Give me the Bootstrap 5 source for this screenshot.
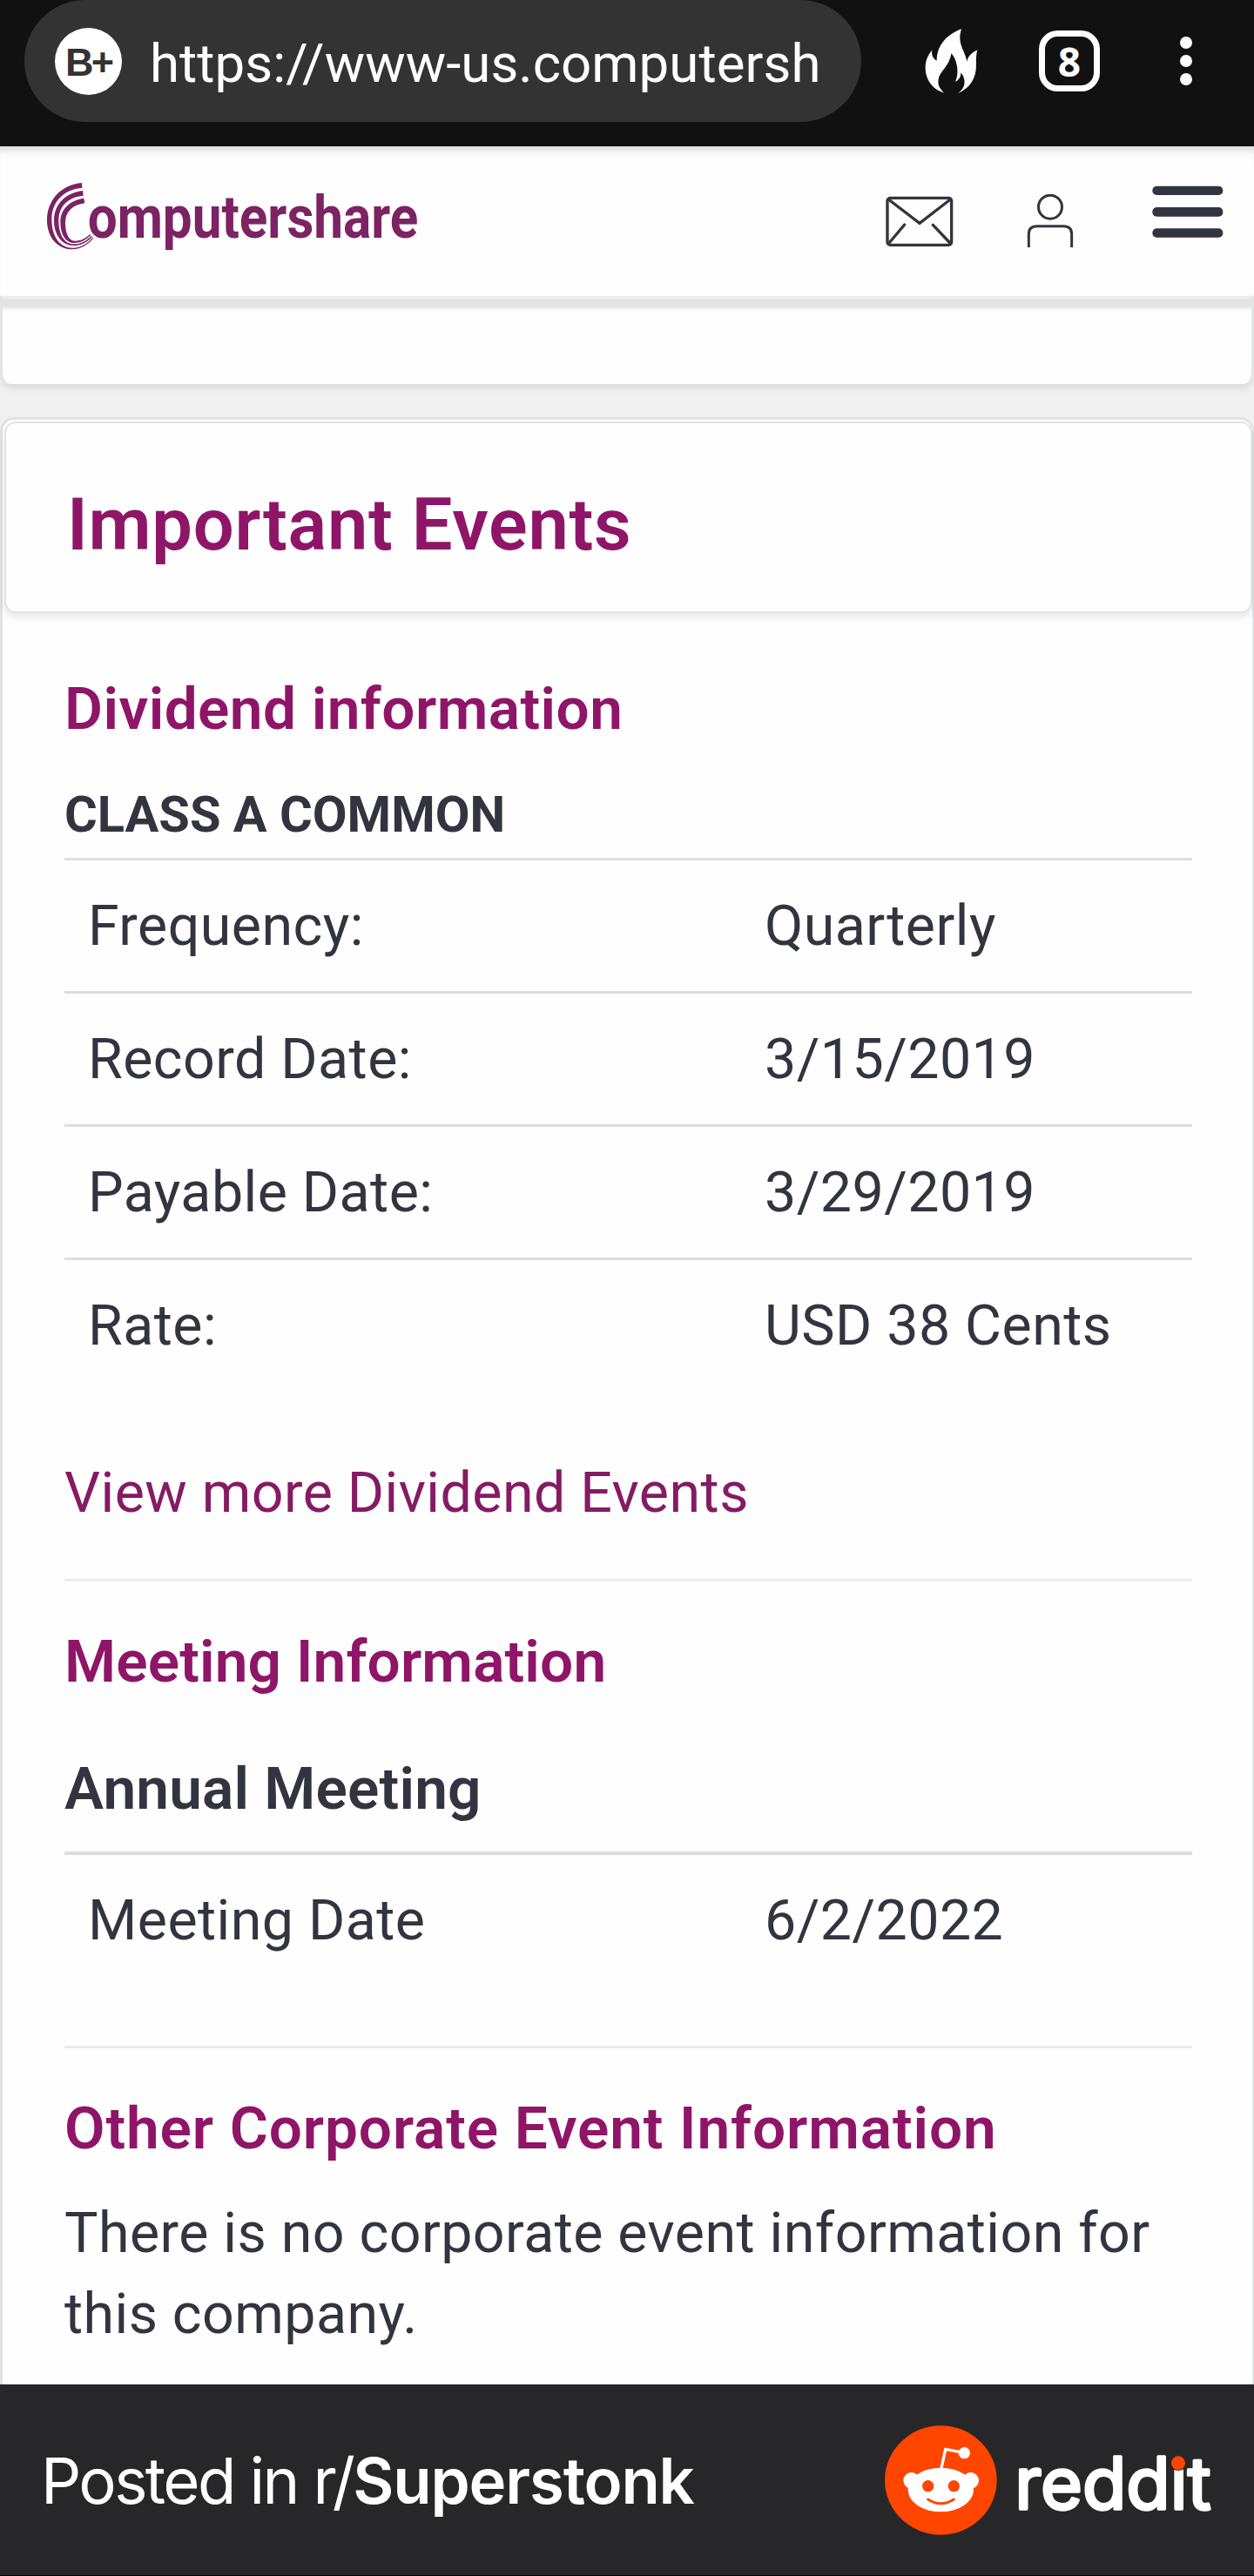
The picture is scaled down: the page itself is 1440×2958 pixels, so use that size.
<!DOCTYPE html>
<html lang="en">
<head>
<meta charset="utf-8">
<meta name="viewport" content="width=device-width, initial-scale=1">
<title>Computershare – Important Events</title>
<link href="https://cdn.jsdelivr.net/npm/bootstrap@5.3.0/dist/css/bootstrap.min.css" rel="stylesheet">
<style>
  body { font-family: Roboto, "Liberation Sans", sans-serif; font-size: 64.5px; line-height: 92.5px; letter-spacing: .45px; color: #32353f; background: #f0f0f0; }
  svg { display: block; flex: none; overflow: visible; }
  .browser-bar { height: 168px; background: #111; }
  .browser-row { height: 140px; }
  .url-pill { width: 961px; height: 140px; margin-left: 28px; padding-left: 35px; border-radius: 70px; background: #333; color: #fff; font-size: 61.8px; letter-spacing: .05px; line-height: 80px; }
  .url-pill .url-text { margin-left: 32px; padding-top: 6px; }
  .flame { margin-left: 73px; }
  .tabs-icon { margin-left: 70px; }
  .dots-icon { margin-left: 92px; }
  .site-nav { height: 172px; background: #fefefe; box-shadow: inset 0 12px 14px -10px rgba(0,0,0,.2); }
  .site-logo { margin: 41px 0 0 54px; }
  .mail-icon { margin: 57px 0 0 537px; }
  .user-icon { margin: 53px 0 0 83px; }
  .menu-icon { margin: 45px 0 0 90px; }
  .prev-panel { height: 101px; border: 3px solid #e3e4e5; border-top: 0; border-bottom: 0; border-radius: 0 0 13px 13px; background: linear-gradient(#ececec 0, #ececec 3px, #e3e3e3 4px, #e4e4e4 12px, #fefefe 17px); box-shadow: 0 4px 8px rgba(0,0,0,.1); }
  .events-panel { margin-top: 38px; height: 2259px; border: 3px solid #e0e1e2; border-right-width: 2px; border-bottom: 0; border-radius: 16px 16px 0 0; background: #fefefe; }
  .events-head { margin: 2px 0 0 2px; height: 220px; padding: 17px 0 0 70px; border: 2px solid #e2e3e3; border-radius: 13px; background: #fefefe; box-shadow: 0 5px 9px rgba(0,0,0,.09); }
  .events-title { font-size: 83px; line-height: 200px; font-weight: 600; letter-spacing: .7px; color: #8f1568; }
  .events-body { padding: 70px 69px 0 71px; }
  .sec-title { font-size: 67.5px; line-height: 80px; font-weight: 600; letter-spacing: .45px; color: #8f1568; }
  .stock-class { margin: 46px 0 15px; font-size: 57.75px; line-height: 70px; font-weight: 700; letter-spacing: 0; }
  .info-row { height: 153px; border-top: 3px solid #dedede; }
  .info-row .info-key { width: 804px; padding-left: 27px; }
  .thick-row { height: 154px; border-top: 4px solid #dcdcdd; }
  .more-link { margin: 71px 0 53px; line-height: 92px; color: #851b64; text-decoration: none; }
  .rule { height: 3px; background: #ebebeb; }
  .meeting-title { margin: 52px 0 0; letter-spacing: .15px; }
  .meeting-kind { margin: 66px 0 32px; letter-spacing: .2px; color: #32353f; }
  .meeting-end { margin-top: 69px; }
  .other-title { margin: 52px 0 34px; letter-spacing: .9px; }
  .post-bar { height: 220px; padding: 0 50px 0 47px; background: #272729; border-bottom: 1px solid #000; color: #fff; font-family: Inter, "Liberation Sans", sans-serif; font-size: 72.5px; letter-spacing: -2.6px; }
  .post-bar b { font-weight: 600; letter-spacing: -1.15px; }
</style>
</head>
<body>
<header class="browser-bar">
  <div class="browser-row d-flex align-items-center">
    <div class="url-pill d-flex align-items-center">
      <svg width="77" height="77" viewBox="0 0 77 77"><circle cx="38.5" cy="38.5" r="38.5" fill="#fff"/><text x="12" y="55" font-family="Liberation Sans" font-weight="700" font-size="45" fill="#333" textLength="56">B+</text></svg>
      <span class="url-text">https://www-us.computersh</span>
    </div>
    <svg class="flame" width="61" height="75" viewBox="306 98 183 224"><path fill="#fff" d="M432 98C400 110 347 140 347 208C335 200 328 190 331 171C315 190 308 210 308 232C308 275 335 308 372 318C355 300 350 290 353 272C356 245 392 225 397 182C415 200 427 245 411 280C425 272 431 262 430 248C445 265 453 300 418 320C460 305 484 270 483 220C482 200 483 185 487 171C470 178 455 190 451 211C447 175 415 150 432 98Z"/></svg>
    <svg class="tabs-icon" width="70" height="70" viewBox="0 0 70 70"><rect x="3.5" y="3.5" width="63" height="63" rx="18" fill="none" stroke="#fff" stroke-width="7"/><text x="35" y="53" text-anchor="middle" font-family="Open Sans" font-weight="700" font-size="46" letter-spacing="0" fill="#fff">8</text></svg>
    <svg class="dots-icon" width="14" height="56" viewBox="0 0 14 56" fill="#fff"><circle cx="7" cy="7" r="7"/><circle cx="7" cy="28" r="7"/><circle cx="7" cy="49" r="7"/></svg>
  </div>
</header>

<nav class="site-nav d-flex align-items-start">
  <svg class="site-logo" width="426" height="80" viewBox="72 57 1278 240" fill="#7b2363">
    <path d="M192 60C120 66 72 120 72 188C72 250 110 289 158 289C190 289 215 272 232 250L229 248C212 268 190 284 160 284C118 284 88 248 88 185C88 125 130 82 193 77Z"/>
    <path d="M195 87C140 93 96 130 96 190C96 240 125 276 162 276C190 276 212 263 228 245L224 243C208 260 190 271 164 271C130 271 112 235 112 190C112 140 145 109 197 104Z"/>
    <path d="M199 113C150 120 118 150 118 195C118 235 135 267 165 267C190 267 207 255 223 240L220 237C206 250 190 260 168 260C146 260 135 230 135 197C135 160 160 135 202 130Z"/>
    <text x="212" y="249" font-weight="700" font-size="204" letter-spacing="0" textLength="1139" lengthAdjust="spacingAndGlyphs">omputershare</text>
  </svg>
  <svg class="mail-icon" width="79" height="60" viewBox="173 676 237 180" fill="none" stroke="#33353f" stroke-width="10" stroke-linecap="round"><rect x="179" y="683" width="221" height="162" rx="10"/><path d="M183 688L290 770L396 688M238 775L185 838M336 776L395 838"/></svg>
  <svg class="user-icon" width="54" height="64" viewBox="657 662 162 192" fill="none" stroke="#33353f" stroke-width="9"><circle cx="738" cy="712" r="40.500"/><path d="M664 851V805Q664 778 692 778H784Q812 778 812 805V851"/></svg>
  <svg class="menu-icon" width="82" height="62" viewBox="1088 640 246 186" fill="#32343f"><rect x="1089" y="642" width="243" height="31" rx="15"/><rect x="1089" y="715" width="243" height="32" rx="15"/><rect x="1089" y="788" width="243" height="31" rx="15"/></svg>
</nav>

<main>
  <div class="prev-panel"></div>
  <section class="events-panel">
    <div class="events-head"><h1 class="events-title m-0">Important Events</h1></div>
    <div class="events-body">
      <h2 class="sec-title m-0">Dividend information</h2>
      <h3 class="stock-class">CLASS A COMMON</h3>
      <div class="info-row d-flex align-items-center"><div class="info-key">Frequency:</div><div>Quarterly</div></div>
      <div class="info-row d-flex align-items-center"><div class="info-key">Record Date:</div><div>3/15/2019</div></div>
      <div class="info-row d-flex align-items-center"><div class="info-key">Payable Date:</div><div>3/29/2019</div></div>
      <div class="info-row d-flex align-items-center"><div class="info-key">Rate:</div><div>USD 38 Cents</div></div>
      <a class="more-link d-block" href="#">View more Dividend Events</a>
      <div class="rule"></div>
      <h2 class="sec-title meeting-title">Meeting Information</h2>
      <h3 class="sec-title meeting-kind">Annual Meeting</h3>
      <div class="info-row thick-row d-flex align-items-center"><div class="info-key">Meeting Date</div><div>6/2/2022</div></div>
      <div class="rule meeting-end"></div>
      <h2 class="sec-title other-title">Other Corporate Event Information</h2>
      <p class="m-0">There is no corporate event information for this company.</p>
    </div>
  </section>
</main>

<footer class="post-bar d-flex align-items-center justify-content-between">
  <div class="pt-1">Posted in r/<b>Superstonk</b></div>
  <svg width="374" height="126" viewBox="109 164 1122 378">
    <ellipse cx="302" cy="353" rx="193" ry="188" fill="#ff4500"/>
    <g fill="#fff"><ellipse cx="302" cy="386" rx="113" ry="76"/><circle cx="201" cy="354" r="28"/><circle cx="405" cy="354" r="28"/><circle cx="383" cy="259" r="20"/></g>
    <path d="M304 312L318 246L380 258" fill="none" stroke="#fff" stroke-width="10" stroke-linejoin="round"/>
    <circle cx="258" cy="373" r="20" fill="#ff4500"/><circle cx="347" cy="373" r="20" fill="#ff4500"/>
    <path d="M258 419Q302 448 347 419" fill="none" stroke="#ff4500" stroke-width="9" stroke-linecap="round"/>
    <text x="557" y="452" font-family="Inter" font-weight="400" font-size="246" letter-spacing="0" fill="#fff" stroke="#fff" stroke-width="10" stroke-linejoin="round" stroke-linecap="round" textLength="676" lengthAdjust="spacingAndGlyphs">reddit</text>
    <circle cx="1120" cy="286" r="34" fill="#272729"/>
    <circle cx="1120" cy="294" r="24" fill="#ff4500"/>
  </svg>
</footer>
<script src="https://cdn.jsdelivr.net/npm/bootstrap@5.3.0/dist/js/bootstrap.bundle.min.js"></script>
</body>
</html>
